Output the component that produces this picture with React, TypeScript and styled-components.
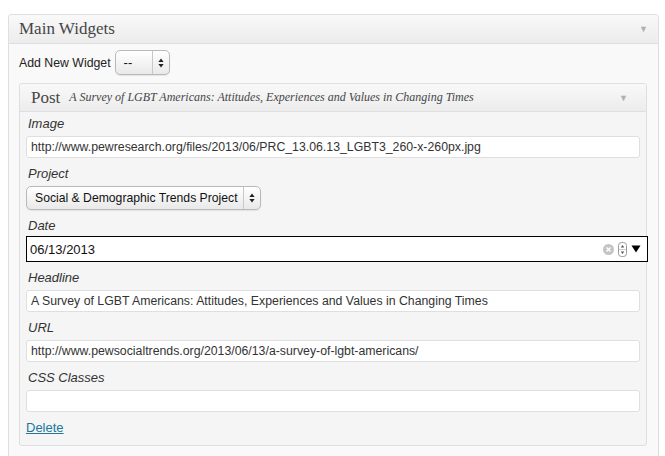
import React from "react";
import styled, { createGlobalStyle } from "styled-components";

const Global = createGlobalStyle`
  html, body { margin: 0; padding: 0; background: #fff; }
  body { font-family: "Liberation Sans", Arial, sans-serif; color: #333; }
  * { box-sizing: border-box; }
`;

const Outer = styled.div`
  margin: 14px 6px 0 8px;
  width: 651px;
  border: 1px solid #dfdfdf;
  border-radius: 3px 3px 0 0;
  background: #f9f9f9;
  padding-bottom: 20px;
`;

const Header = styled.div<{ $inner?: boolean }>`
  display: flex;
  align-items: center;
  height: ${(p) => (p.$inner ? "28px" : "29px")};
  padding: 0 ${(p) => (p.$inner ? "18px" : "10px")} 0 ${(p) => (p.$inner ? "11px" : "10px")};
  background: linear-gradient(to bottom, #f9f9f9, #ececec);
  border-bottom: 1px solid #dfdfdf;
  border-radius: 3px 3px 0 0;
`;

const Title = styled.span<{ $size: number }>`
  font-family: "Liberation Serif", Georgia, serif;
  font-size: ${(p) => p.$size}px;
  color: #464646;
`;

const SubTitle = styled.span`
  font-family: "Liberation Serif", Georgia, serif;
  font-style: italic;
  font-size: 12px;
  color: #464646;
  margin-left: 9px;
`;

const Arrow = styled.span`
  margin-left: auto;
  color: #b0b0b0;
  font-size: 9px;
`;

const Body = styled.div`
  padding: 6px 11px 0 10px;
`;

const AddRow = styled.div`
  display: flex;
  align-items: center;
  gap: 4px;
  font-size: 12.3px;
  color: #222;
`;

const SelectBox = styled.div<{ $w: number; $h: number; $fs: number }>`
  display: flex;
  align-items: stretch;
  width: ${(p) => p.$w}px;
  height: ${(p) => p.$h}px;
  border: 1px solid #b9b9b9;
  border-radius: 5px;
  background: linear-gradient(to bottom, #ffffff, #e9e9e9);
  box-shadow: 0 1px 1px rgba(0, 0, 0, 0.08);
  font-size: ${(p) => p.$fs}px;
  color: #111;
  white-space: nowrap;
`;

const SelectText = styled.span`
  flex: 1;
  display: flex;
  align-items: center;
  padding-left: 8px;
  border-right: 1px solid #c8c8c8;
`;

const SelectArrows = styled.span`
  width: 16px;
  display: flex;
  align-items: center;
  justify-content: center;
`;

const Inner = styled.div`
  margin-top: 8px;
  border: 1px solid #dfdfdf;
  border-radius: 3px;
  background: #f5f5f5;
`;

const Fields = styled.div`
  display: flex;
  flex-direction: column;
  gap: 8px;
  padding: 4px 6px 10px;
`;

const Field = styled.div`
  display: flex;
  flex-direction: column;
  gap: 4px;
`;

const Label = styled.label`
  display: block;
  font-size: 13px;
  line-height: 16px;
  font-style: italic;
  color: #333;
  padding-left: 2px;
`;

const TextInput = styled.div`
  height: 22px;
  display: flex;
  align-items: center;
  padding: 0 4px;
  background: #fff;
  border: 1px solid #dfdfdf;
  border-radius: 3px;
  font-size: 12.3px;
  color: #333;
  white-space: nowrap;
  overflow: hidden;
`;

const DateInput = styled.div`
  height: 26px;
  margin: -2px -8px 0 0;
  display: flex;
  align-items: center;
  padding: 0 6px 0 3px;
  background: #fff;
  border: 1px solid #000;
  font-size: 13px;
  color: #111;
`;

const DateIcons = styled.span`
  margin-left: auto;
  display: flex;
  align-items: center;
  gap: 4px;
`;

const DeleteLink = styled.a`
  font-size: 13px;
  color: #21759b;
  text-decoration: underline;
  align-self: flex-start;
`;

const UpDown = () => (
  <svg width="6" height="10" viewBox="0 0 6 10">
    <path d="M3 0.5 L5.6 4 L0.4 4 Z" fill="#222" />
    <path d="M3 9.5 L5.6 6 L0.4 6 Z" fill="#222" />
  </svg>
);

const ClearIcon = () => (
  <svg width="11" height="11" viewBox="0 0 11 11">
    <circle cx="5.5" cy="5.5" r="5.5" fill="#c4c4c4" />
    <path d="M3.5 3.5 L7.5 7.5 M7.5 3.5 L3.5 7.5" stroke="#fff" strokeWidth="1.4" />
  </svg>
);

const Spinner = () => (
  <svg width="9" height="15" viewBox="0 0 9 15">
    <rect x="0.5" y="0.5" width="8" height="14" rx="3" fill="#fff" stroke="#9a9a9a" />
    <line x1="1" y1="7.5" x2="8" y2="7.5" stroke="#ccc" />
    <path d="M4.5 3 L6.2 5.6 L2.8 5.6 Z" fill="#555" />
    <path d="M4.5 12 L6.2 9.4 L2.8 9.4 Z" fill="#555" />
  </svg>
);

const DropTri = () => (
  <svg width="10" height="8" viewBox="0 0 10 8">
    <path d="M0.5 0.5 L9.5 0.5 L5 7.5 Z" fill="#000" />
  </svg>
);

export default function App() {
  return (
    <>
      <Global />
      <Outer>
        <Header>
          <Title $size={17}>Main Widgets</Title>
          <Arrow>▼</Arrow>
        </Header>
        <Body>
          <AddRow>
            Add New Widget
            <SelectBox $w={55} $h={25} $fs={13}>
              <SelectText>--</SelectText>
              <SelectArrows>
                <UpDown />
              </SelectArrows>
            </SelectBox>
          </AddRow>
          <Inner>
            <Header $inner>
              <Title $size={17}>Post</Title>
              <SubTitle>A Survey of LGBT Americans: Attitudes, Experiences and Values in Changing Times</SubTitle>
              <Arrow>▼</Arrow>
            </Header>
            <Fields>
              <Field>
                <Label>Image</Label>
                <TextInput>http://www.pewresearch.org/files/2013/06/PRC_13.06.13_LGBT3_260-x-260px.jpg</TextInput>
              </Field>
              <Field>
                <Label>Project</Label>
                <SelectBox $w={235} $h={24} $fs={12.2}>
                  <SelectText>Social &amp; Demographic Trends Project</SelectText>
                  <SelectArrows>
                    <UpDown />
                  </SelectArrows>
                </SelectBox>
              </Field>
              <Field>
                <Label>Date</Label>
                <DateInput>
                  06/13/2013
                  <DateIcons>
                    <ClearIcon />
                    <Spinner />
                    <DropTri />
                  </DateIcons>
                </DateInput>
              </Field>
              <Field>
                <Label>Headline</Label>
                <TextInput>A Survey of LGBT Americans: Attitudes, Experiences and Values in Changing Times</TextInput>
              </Field>
              <Field>
                <Label>URL</Label>
                <TextInput>http://www.pewsocialtrends.org/2013/06/13/a-survey-of-lgbt-americans/</TextInput>
              </Field>
              <Field>
                <Label>CSS Classes</Label>
                <TextInput />
              </Field>
              <DeleteLink href="#">Delete</DeleteLink>
            </Fields>
          </Inner>
        </Body>
      </Outer>
    </>
  );
}
